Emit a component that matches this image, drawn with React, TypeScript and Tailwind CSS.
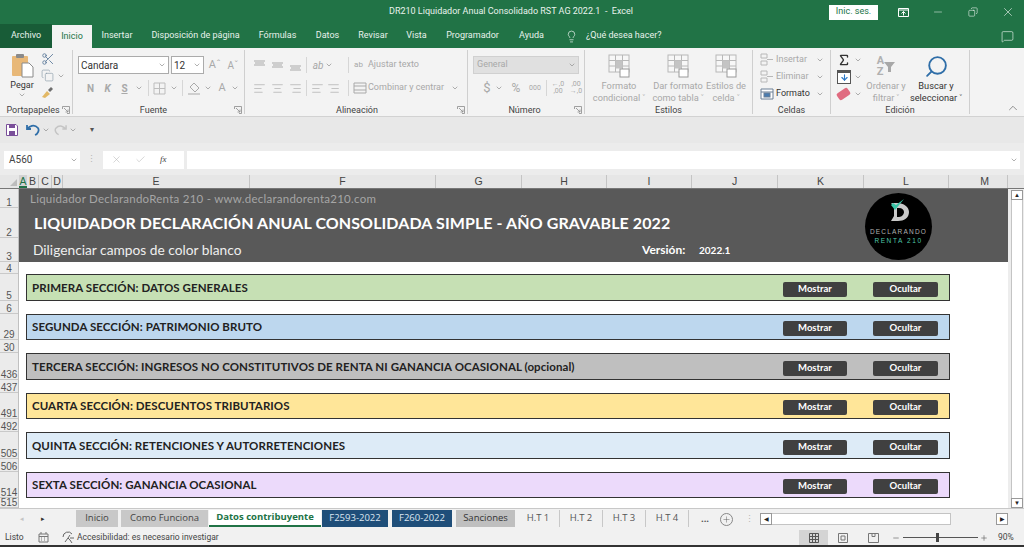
import {
  AlignCenter,
  AlignLeft,
  AlignRight,
  ArrowDown,
  ChevronDown,
  ChevronUp,
  Copy,
  Lightbulb,
  MessageSquare,
  Minus,
  Plus,
  Scissors,
  Search,
  Sigma,
  X,
  Check,
} from "lucide-react";

const ui = "font-['Roboto','Noto_Sans',sans-serif]";
const openSans = "font-['Open_Sans','Noto_Sans',sans-serif]";

const tabs: [string, string][] = [
  ["Insertar", "w-[50px]"],
  ["Disposición de página", "w-[107px]"],
  ["Fórmulas", "w-[57px]"],
  ["Datos", "w-[43px]"],
  ["Revisar", "w-[48px]"],
  ["Vista", "w-[39px]"],
  ["Programador", "w-[73px]"],
  ["Ayuda", "w-[45px]"],
];

const rows: [string, string][] = [
  ["1", "h-[19px]"],
  ["2", "h-[30px]"],
  ["3", "h-[24px]"],
  ["4", "h-[12px]"],
  ["5", "h-[27px]"],
  ["6", "h-[13px]"],
  ["29", "h-[26px]"],
  ["30", "h-[13px]"],
  ["436", "h-[27px]"],
  ["437", "h-[13px]"],
  ["491", "h-[26px]"],
  ["492", "h-[13px]"],
  ["505", "h-[27px]"],
  ["506", "h-[13px]"],
  ["514", "h-[26px]"],
  ["515", "h-[10px]"],
];

const columns: [string, string][] = [
  ["B", "w-[12px]"],
  ["C", "w-[13px]"],
  ["D", "w-[11px]"],
  ["E", "w-[187px]"],
  ["F", "w-[186px]"],
  ["G", "w-[86px]"],
  ["H", "w-[85px]"],
  ["I", "w-[85px]"],
  ["J", "w-[86px]"],
  ["K", "w-[86px]"],
  ["L", "w-[85px]"],
  ["M", "w-[59px] pl-[13px]"],
];

const sections = [
  { title: "PRIMERA SECCIÓN: DATOS GENERALES", cls: "h-[27px] bg-[#c6e0b4]" },
  { title: "SEGUNDA SECCIÓN: PATRIMONIO BRUTO", cls: "h-[26px] bg-[#bdd7ee]" },
  { title: "TERCERA SECCIÓN: INGRESOS NO CONSTITUTIVOS DE RENTA NI GANANCIA OCASIONAL (opcional)", cls: "h-[27px] bg-[#bfbfbf]" },
  { title: "CUARTA SECCIÓN: DESCUENTOS TRIBUTARIOS", cls: "h-[26px] bg-[#ffe699]" },
  { title: "QUINTA SECCIÓN: RETENCIONES Y AUTORRETENCIONES", cls: "h-[27px] bg-[#ddebf7]" },
  { title: "SEXTA SECCIÓN: GANANCIA OCASIONAL", cls: "h-[26px] bg-[#ecdafb]" },
];

const sheetTabs = [
  { name: "Inicio", cls: "w-[42px] bg-[#c8c8c8] text-[#444] mr-[3px]" },
  { name: "Como Funciona", cls: "w-[87px] bg-[#c8c8c8] text-[#444] mr-[1px]" },
  { name: "Datos contribuyente", cls: "w-[112px] bg-white text-[#217346] font-bold border-b-2 border-[#217346] mr-[1px]" },
  { name: "F2593-2022", cls: "w-[66px] bg-[#1f4e79] text-[#dce6f1] mr-[4px]" },
  { name: "F260-2022", cls: "w-[60px] bg-[#1f4e79] text-[#dce6f1] mr-[4px]" },
  { name: "Sanciones", cls: "w-[59px] bg-[#bfbfbf] text-[#333] mr-[2px]" },
  { name: "H.T 1", cls: "w-[43px] text-[#555] border-r border-[#c8c8c8]" },
  { name: "H.T 2", cls: "w-[43px] text-[#555] border-r border-[#c8c8c8]" },
  { name: "H.T 3", cls: "w-[43px] text-[#555] border-r border-[#c8c8c8]" },
  { name: "H.T 4", cls: "w-[43px] text-[#555] border-r border-[#c8c8c8]" },
];

function Caret({ className = "" }: { className?: string }) {
  return <ChevronDown size={8} strokeWidth={2} className={`text-[#8a8a8a] shrink-0 ${className}`} />;
}

function Sep() {
  return <div className="w-px h-[64px] mt-[2px] bg-[#cfcfcf] shrink-0" />;
}

function Launcher() {
  return (
    <svg width="8" height="8" viewBox="0 0 8 8" className="shrink-0 text-[#8a8a8a]" fill="none" stroke="currentColor">
      <path d="M0.5 3V0.5H7.5V7.5H5M2 2l4 4M6 3.5V6H3.5" strokeWidth="0.8" />
    </svg>
  );
}

function GroupLabel({ text, launcher, cls = "" }: { text: string; launcher?: boolean; cls?: string }) {
  return (
    <div className={`h-[12px] flex items-center text-[9px] leading-none text-[#444] ${cls}`}>
      <span className="flex-1 text-center">{text}</span>
      {launcher && <Launcher />}
    </div>
  );
}

function VAlign({ y }: { y: number }) {
  return (
    <svg width="13" height="13" viewBox="0 0 13 13" stroke="#a9a9a9" className="shrink-0">
      <path d={`M1 ${y}h11M2 ${y + 2}h9M1 ${y + 4}h11`} />
    </svg>
  );
}

function GridIcon({ color = "#b8b8b8" }: { color?: string }) {
  return (
    <svg width="22" height="24" viewBox="0 0 22 24" fill="none">
      <rect x="1" y="1" width="20" height="17" fill="#f7f7f7" stroke={color} />
      <path d="M1 6.5H21M1 12H21M7.5 1V18M14.5 1V18" stroke={color} />
      <rect x="7.5" y="6.5" width="7" height="8" fill="#c4c4c4" />
      <rect x="12" y="15" width="9" height="8" fill="#fff" stroke="#9a9a9a" />
    </svg>
  );
}

function BigButton({ lines, cls, icon, dark }: { lines: string[]; cls: string; icon: React.ReactNode; dark?: boolean }) {
  return (
    <div className={`flex flex-col items-center shrink-0 ${cls}`}>
      <div className="h-[26px] flex items-center justify-center mt-[5px]">{icon}</div>
      <div className={`mt-[1px] text-center text-[9.25px] leading-[12px] whitespace-nowrap ${dark ? "text-[#333]" : "text-[#a8a8a8]"}`}>
        {lines.map((l) => (
          <div key={l}>{l}</div>
        ))}
      </div>
    </div>
  );
}

function Ribbon() {
  const ic = "text-[#a9a9a9] shrink-0";
  return (
    <div className={`h-[69px] flex bg-[#f3f3f3] border-b border-[#d2d2d2] ${ui}`}>
      {/* Portapapeles */}
      <div className="w-[72px] flex flex-col shrink-0">
        <div className="h-[57px] flex">
          <div className="w-[40px] flex flex-col items-center pt-[5px] pl-[4px] text-[#333]">
            <svg width="23" height="25" viewBox="0 0 23 25">
              <rect x="1" y="3" width="16" height="20" rx="1" fill="#e8b878" />
              <rect x="5" y="1" width="8" height="4" rx="1" fill="#8a8a8a" />
              <path d="M11 10h7l4 4v10H11z" fill="#fff" stroke="#8a8a8a" />
            </svg>
            <span className="text-[9px] leading-[12px] mt-[1px]">Pegar</span>
            <Caret />
          </div>
          <div className="flex-1 flex flex-col pt-[4px] gap-[2px] pl-[1px]">
            <Scissors size={14} strokeWidth={1.5} className="text-[#5d7a9a]" />
            <div className="flex items-center gap-[3px] mt-[1px]">
              <Copy size={13} strokeWidth={1.2} className="text-[#8a9aa8]" />
              <Caret />
            </div>
            <svg width="14" height="14" viewBox="0 0 14 14" className="mt-[1px]">
              <path d="M1 12l5-6 3 3-5 4z" fill="#e2b865" />
              <path d="M7 5l3-3 2 2-3 3z" fill="#6d6d6d" />
            </svg>
          </div>
        </div>
        <GroupLabel text="Portapapeles" launcher cls="pl-[4px] pr-[2px] justify-between" />
      </div>
      <Sep />

      {/* Fuente */}
      <div className="w-[171px] flex flex-col shrink-0">
        <div className="h-[57px] pt-[8px] pl-[5px] flex flex-col gap-[5px]">
          <div className="h-[18px] flex items-center">
            <div className="w-[91px] h-[18px] bg-white border border-[#ababab] flex items-center pl-[2px] pr-[2px] text-[10px] text-[#333]">
              <span className="flex-1">Candara</span>
              <Caret />
            </div>
            <div className="w-[33px] h-[18px] ml-[2px] bg-white border border-[#ababab] flex items-center pl-[2px] pr-[2px] text-[10px] text-[#333]">
              <span className="flex-1">12</span>
              <Caret />
            </div>
            <span className="ml-[2px] text-[11px] text-[#a9a9a9] w-[18px] text-center">Aˆ</span>
            <span className="text-[10px] text-[#a9a9a9] w-[18px] text-center">Aˇ</span>
          </div>
          <div className="h-[18px] flex items-center pl-[4px] text-[10px] font-bold text-[#a9a9a9]">
            <span className="w-[17px] text-center">N</span>
            <span className="w-[17px] text-center italic">K</span>
            <span className="w-[17px] text-center underline">S</span>
            <Caret className="ml-[2px]" />
            <div className="w-px h-[16px] bg-[#d6d6d6] ml-[5px]" />
            <svg width="13" height="13" viewBox="0 0 13 13" className="ml-[4px]" fill="none" stroke="#bdbdbd">
              <path d="M1 1h11v11H1zM6.5 1v11M1 6.5h11" />
            </svg>
            <Caret className="ml-[4px]" />
            <div className="w-px h-[16px] bg-[#d6d6d6] ml-[4px]" />
            <svg width="14" height="14" viewBox="0 0 14 14" className="ml-[4px]" fill="none" stroke="#a9a9a9">
              <path d="M7 2l5 5-4 4-5-5zM1 13h12" />
            </svg>
            <Caret className="ml-[3px]" />
            <span className="ml-[5px] text-[11px] w-[10px] text-center font-normal">A</span>
            <Caret className="ml-[4px]" />
          </div>
        </div>
        <GroupLabel text="Fuente" launcher cls="pr-[2px]" />
      </div>
      <Sep />

      {/* Alineación */}
      <div className="w-[222px] flex flex-col shrink-0">
        <div className="h-[57px] pt-[8px] pl-[8px] flex flex-col gap-[5px] text-[9px] text-[#a8a8a8] whitespace-nowrap">
          <div className="h-[18px] flex items-center">
            <VAlign y={2} />
            <span className="w-[5px]" />
            <VAlign y={4} />
            <span className="w-[5px]" />
            <VAlign y={7} />
            <div className="w-px h-[16px] bg-[#d6d6d6] ml-[4px] mr-[4px]" />
            <span className="w-[14px] text-center text-[10px] italic">ab</span>
            <Caret />
            <div className="w-px h-[16px] bg-[#d6d6d6] ml-[15px]" />
            <span className="w-[19px] text-[8px] leading-[8px] text-center">ab</span>
            <span>Ajustar texto</span>
          </div>
          <div className="h-[18px] flex items-center">
            <AlignLeft size={13} strokeWidth={1.2} className={`${ic} mr-[5px]`} />
            <AlignCenter size={13} strokeWidth={1.2} className={`${ic} mr-[5px]`} />
            <AlignRight size={13} strokeWidth={1.2} className={`${ic}`} />
            <div className="w-px h-[16px] bg-[#d6d6d6] ml-[4px] mr-[4px]" />
            <AlignLeft size={13} strokeWidth={1.2} className={`${ic} mr-[3px]`} />
            <AlignRight size={13} strokeWidth={1.2} className={`${ic}`} />
            <div className="w-px h-[16px] bg-[#d6d6d6] ml-[8px] mr-[4px]" />
            <svg width="14" height="12" viewBox="0 0 14 12" fill="none" stroke="#a9a9a9" className="mr-[1px] shrink-0">
              <path d="M1 1h12v10H1zM1 4h12M1 8h12" />
            </svg>
            <span>Combinar y centrar</span>
            <Caret className="ml-[7px]" />
          </div>
        </div>
        <GroupLabel text="Alineación" launcher cls="pl-[12px] pr-[2px]" />
      </div>
      <Sep />

      {/* Número */}
      <div className="w-[116px] flex flex-col shrink-0">
        <div className="h-[57px] pt-[8px] pl-[5px] flex flex-col gap-[5px] text-[#a8a8a8]">
          <div className="w-[106px] h-[18px] bg-[#e0e0e0] border border-[#d0d0d0] flex items-center pl-[3px] pr-[2px] text-[9px]">
            <span className="flex-1">General</span>
            <Caret />
          </div>
          <div className="h-[18px] flex items-center pl-[9px] text-[13px]">
            <span className="w-[10px] text-center">$</span>
            <Caret className="ml-[3px]" />
            <span className="ml-[6px] w-[14px] text-center text-[12px]">%</span>
            <span className="ml-[4px] w-[16px] text-center text-[7px]">000</span>
            <div className="w-px h-[16px] bg-[#d6d6d6] ml-[3px]" />
            <span className="ml-[3px] w-[16px] text-center text-[7px] leading-[7px]">←,0 ,00</span>
            <span className="ml-[2px] w-[16px] text-center text-[7px] leading-[7px]">,00 →,0</span>
          </div>
        </div>
        <GroupLabel text="Número" launcher cls="pl-[7px] pr-[2px]" />
      </div>
      <Sep />

      {/* Estilos */}
      <div className="w-[167px] flex flex-col shrink-0">
        <div className="h-[57px] flex">
          <BigButton cls="w-[68px]" lines={["Formato", "condicional ˅"]} icon={<GridIcon />} />
          <BigButton cls="w-[50px]" lines={["Dar formato", "como tabla ˅"]} icon={<GridIcon />} />
          <BigButton cls="w-[46px]" lines={["Estilos de", "celda ˅"]} icon={<GridIcon />} />
        </div>
        <GroupLabel text="Estilos" />
      </div>
      <Sep />

      {/* Celdas */}
      <div className="w-[77px] flex flex-col shrink-0">
        <div className="h-[57px] pt-[3px] pl-[7px] flex flex-col text-[9px] text-[#a8a8a8]">
          {["Insertar", "Eliminar"].map((t) => (
            <div key={t} className="h-[17px] flex items-center">
              <svg width="14" height="13" viewBox="0 0 14 13" fill="none" stroke="#b8b8b8" className="mr-[2px]">
                <path d="M1 1h6v4H1zM1 8h6v4H1zM7 6.5h6" />
              </svg>
              <span className="w-[40px]">{t}</span>
              <Caret />
            </div>
          ))}
          <div className="h-[17px] flex items-center text-[#333]">
            <svg width="14" height="13" viewBox="0 0 14 13" fill="#fff" stroke="#6b7f95" className="mr-[2px]">
              <path d="M1 2h12v10H1zM1 5h12" />
              <rect x="4" y="6" width="6" height="4" fill="#4a7cb0" />
            </svg>
            <span className="w-[40px]">Formato</span>
            <Caret />
          </div>
        </div>
        <GroupLabel text="Celdas" />
      </div>
      <Sep />

      {/* Edición */}
      <div className="w-[138px] flex flex-col shrink-0">
        <div className="h-[57px] flex">
          <div className="w-[36px] pt-[3px] pl-[6px] flex flex-col">
            <div className="h-[17px] flex items-center gap-[3px]">
              <Sigma size={14} strokeWidth={2.4} className="text-[#333]" />
              <Caret />
            </div>
            <div className="h-[17px] flex items-center gap-[3px]">
              <div className="w-[14px] h-[14px] bg-white border border-[#555] border-t-[3px] flex items-center justify-center">
                <ArrowDown size={9} strokeWidth={3} className="text-[#2b78c5]" />
              </div>
              <Caret />
            </div>
            <div className="h-[17px] flex items-center gap-[3px]">
              <div className="w-[13px] h-[8px] bg-[#e06b80] rounded-[2px] rotate-[-35deg]" />
              <Caret className="ml-[1px]" />
            </div>
          </div>
          <BigButton
            cls="w-[38px]"
            lines={["Ordenar y", "filtrar ˅"]}
            icon={
              <div className="flex items-center">
                <div className="flex flex-col text-[11px] leading-[11px] font-bold text-[#b0b0b0]">
                  <span>A</span>
                  <span>Z</span>
                </div>
                <svg width="11" height="11" viewBox="0 0 11 11" fill="#a8a8a8">
                  <path d="M0 1h11L7 6v5H4V6z" />
                </svg>
              </div>
            }
          />
          <BigButton
            cls="w-[58px] ml-[2px]"
            dark
            lines={["Buscar y", "seleccionar ˅"]}
            icon={<Search size={25} strokeWidth={1.8} className="text-[#2f6ea8] -scale-x-100" />}
          />
        </div>
        <GroupLabel text="Edición" />
      </div>
      <Sep />
      <div className="flex-1 flex items-end justify-end pr-[4px] pb-[1px]">
        <ChevronUp size={14} strokeWidth={1.2} className="text-[#666]" />
      </div>
    </div>
  );
}

function Sheet() {
  return (
    <div className="flex h-[319px]">
      <div className="w-[19px] shrink-0 bg-[#ebebeb] flex flex-col border-r border-[#c0c0c0] font-['Liberation_Sans',sans-serif]">
        {rows.map(([label, h]) => (
          <div key={label} className={`${h} flex items-end justify-center border-b border-[#c9c9c9] text-[10px] leading-[9px] text-[#555]`}>
            {label}
          </div>
        ))}
      </div>
      <div className="relative w-[989px] shrink-0 bg-white flex flex-col">
        <div className="h-[73px] bg-[#595959] flex flex-col font-['Lato',sans-serif]">
          <div className="h-[19px] pl-[11px] flex items-center text-[11.5px] text-[#a6a6a6] tracking-[0.25px]">
            Liquidador DeclarandoRenta 210 - www.declarandorenta210.com
          </div>
          <div className="h-[30px] pl-[15px] flex items-center text-[16px] font-bold text-white tracking-[0.09px]">
            LIQUIDADOR DECLARACIÓN ANUAL CONSOLIDADA SIMPLE - AÑO GRAVABLE 2022
          </div>
          <div className="h-[24px] pl-[14px] flex items-center text-white">
            <span className="w-[609px] text-[13.75px] text-[#eeeeee]">Diligenciar campos de color blanco</span>
            <span className="w-[57px] text-[12px] font-bold">Versión:</span>
            <span className="text-[10px] font-bold">2022.1</span>
          </div>
        </div>
        {/* logo floats over the cells */}
        <div className="absolute left-[846px] top-[4px] w-[67px] h-[67px] rounded-full bg-black flex flex-col items-center font-['Liberation_Sans',sans-serif]">
          <svg width="24" height="26" viewBox="0 0 24 26" className="mt-[4px]">
            <path d="M4 6h6c7 0 12 4 12 9 0 6-5 9-11 9H4l3-5V9z" fill="#c9c9c9" />
            <path d="M10 11h2c3 0 5 2 5 4s-2 5-5 5h-2z" fill="#000" />
            <path d="M4 8l4 5 9-11-8 6-3-2z" fill="#39c4a6" />
          </svg>
          <span className="text-[6.5px] leading-[9px] tracking-[1.2px] text-[#b0b0b0] mt-[4px]">DECLARANDO</span>
          <span className="text-[6.5px] leading-[9px] tracking-[1.6px] text-[#4fc7aa]">RENTA 210</span>
        </div>
        <div className="flex flex-col gap-[13px] pl-[7px] pt-[12px] font-['Lato',sans-serif]">
          {sections.map((s) => (
            <div key={s.title} className={`${s.cls} w-[924px] border border-[#333] flex items-center pl-[5px] pr-[11px]`}>
              <span className="flex-1 text-[11.5px] font-bold text-[#222] tracking-[0.07px] whitespace-nowrap">{s.title}</span>
              <div className="flex gap-[26px] pt-[3px] text-[9.5px] font-bold text-white">
                <div className="w-[64px] h-[15px] rounded-[2px] bg-[#404040] flex items-center justify-center">Mostrar</div>
                <div className="w-[65px] h-[15px] rounded-[2px] bg-[#404040] flex items-center justify-center">Ocultar</div>
              </div>
            </div>
          ))}
        </div>
      </div>
      <div className="flex-1 bg-[#ededed] flex flex-col items-center pt-[1px] pl-[2px]">
        <div className="w-[12px] h-[10px] bg-white border border-[#999] text-[#222] flex items-center justify-center text-[6px] leading-none">▲</div>
        <div className="w-[12px] flex-1 bg-white border-x border-[#c4c4c4]" />
        <div className="w-[12px] h-[10px] bg-white border border-[#999] text-[#222] flex items-center justify-center text-[6px] leading-none">▼</div>
      </div>
    </div>
  );
}

export default function App() {
  return (
    <div className={`w-[1024px] h-[547px] overflow-hidden bg-[#f1f1f1] ${ui}`}>
      {/* title bar */}
      <div className="h-[24px] bg-[#217346] flex items-center text-white">
        <div className="w-[784px] text-center text-[9px] text-[#e8f2ec] pl-[238px]">
          DR210 Liquidador Anual Consolidado RST AG 2022.1&nbsp; -&nbsp; Excel
        </div>
        <div className="ml-[45px] w-[49px] h-[15px] bg-white text-[#217346] text-[9px] flex items-center justify-center">Inic. ses.</div>
        <svg width="11" height="9" viewBox="0 0 11 9" fill="none" stroke="#fff" className="ml-[20px]">
          <path d="M0.5 0.500h10v8h-10zM0.500 2h10M5.500 7.500V3.500M3.500 5.500l2-2 2 2" />
        </svg>
        <Minus size={12} strokeWidth={1} className="ml-[23px] text-white" />
        <Copy size={10} strokeWidth={1.3} className="ml-[24px] text-white -scale-x-100" />
        <X size={14} strokeWidth={1} className="ml-[23px] text-white" />
      </div>

      {/* tabs */}
      <div className="h-[24px] bg-[#217346] flex items-end text-[9px] text-[#e8f2ec]">
        <div className="w-[52px] h-[24px] bg-[#185c37] flex items-center justify-center">Archivo</div>
        <div className="w-[40px] h-[23px] bg-[#f3f3f3] text-[#217346] flex items-center justify-center">Inicio</div>
        <div className="h-[24px] flex items-center">
          {tabs.map(([t, w]) => (
            <span key={t} className={`${w} text-center whitespace-nowrap`}>
              {t}
            </span>
          ))}
          <span className="flex items-center gap-[8px] ml-[11px]">
            <Lightbulb size={13} strokeWidth={1.3} />
            ¿Qué desea hacer?
          </span>
        </div>
        <div className="flex-1 h-[24px] flex items-center justify-end pr-[10px]">
          <MessageSquare size={13} strokeWidth={1.2} />
        </div>
      </div>

      <Ribbon />

      {/* quick access */}
      <div className="h-[26px] bg-[#e8e8e8] flex items-center pl-[6px]">
        <svg width="12" height="12" viewBox="0 0 12 12" className="shrink-0">
          <path d="M0.5 0.5h9.5l1.5 1.5v9.5H0.5z" fill="#fff" stroke="#7a4f9a" />
          <rect x="3" y="1" width="6" height="3" fill="#7a4f9a" />
          <rect x="3" y="7" width="6" height="4" fill="#7a4f9a" />
        </svg>
        <svg width="14" height="12" viewBox="0 0 14 12" fill="none" stroke="#2f6ea8" strokeWidth="1.8" className="ml-[8px]">
          <path d="M1 1v4h4M1.5 5C3 2.5 8-.5 12 4c1.5 2 0 6-3 7" />
        </svg>
        <Caret className="ml-[2px]" />
        <svg width="13" height="12" viewBox="0 0 14 12" fill="none" stroke="#c4c4c4" strokeWidth="1.6" className="ml-[4px]">
          <path d="M13 1v4H9M12.5 5C11 2.500 6-.5 2 4c-1.500 2 0 6 3 7" />
        </svg>
        <Caret className="ml-[2px]" />
        <span className="ml-[13px] text-[8px] text-[#555] leading-none">▾</span>
      </div>

      {/* formula bar */}
      <div className="h-[32px] bg-[#ececec] flex items-center pl-[4px] pt-[1px]">
        <div className="w-[76px] h-[18px] bg-white flex items-center pl-[5px] pr-[2px] text-[10px] text-[#444]">
          <span className="flex-1">A560</span>
          <Caret />
        </div>
        <span className="w-[23px] text-center text-[9px] text-[#b5b5b5]">⋮</span>
        <div className="w-[81px] h-[18px] bg-white flex items-center pl-[8px] gap-[13px]">
          <X size={11} strokeWidth={1.2} className="text-[#b5b5b5]" />
          <Check size={11} strokeWidth={1.2} className="text-[#b5b5b5]" />
          <span className="text-[9px] italic font-['Liberation_Serif',serif] text-[#444] ml-[1px]">fx</span>
        </div>
        <div className="ml-[3px] w-[833px] h-[18px] bg-white flex items-center justify-end pr-[2px]">
          <Caret />
        </div>
      </div>

      {/* column header */}
      <div className="h-[14px] bg-[#e6e6e6] flex border-b border-[#777] font-['Liberation_Sans',sans-serif] text-[10.5px] leading-[13px] text-[#444]">
        <div className="w-[19px] flex items-end justify-end pr-[2px] pb-[2px]">
          <div className="w-0 h-0 border-l-[7px] border-l-transparent border-b-[7px] border-b-[#bdbdbd]" />
        </div>
        <div className="w-[8px] bg-[#d2d2d2] border-b-2 border-[#217346] text-[#217346] flex justify-center">A</div>
        {columns.map(([c, w]) => (
          <div key={c} className={`${w} flex justify-center border-r border-[#c4c4c4]`}>
            {c}
          </div>
        ))}
      </div>

      <Sheet />

      {/* sheet tabs */}
      <div className={`h-[22px] bg-[#f1f1f1] border-t border-[#c8c8c8] flex items-start text-[9.5px] ${openSans}`}>
        <div className="w-[76px] h-[17px] mt-[1px] flex items-center pl-[20px] gap-[17px] text-[7px] text-[#333] leading-none">
          <span className="text-[#c4c4c4]">◂</span>
          <span>▸</span>
        </div>
        {sheetTabs.map((t) => (
          <div key={t.name} className={`h-[17px] mt-[1px] shrink-0 flex items-center justify-center ${t.cls}`}>
            {t.name}
          </div>
        ))}
        <div className="h-[18px] mt-[1px] flex items-center text-[#555]">
          <span className="w-[16px] ml-[8px] text-center font-bold">...</span>
          <div className="ml-[7px] w-[13px] h-[13px] rounded-full border border-[#888] flex items-center justify-center">
            <Plus size={9} strokeWidth={1.2} />
          </div>
          <span className="ml-[12px] w-[6px] text-[#b5b5b5] text-[9px]">⋮</span>
          <div className="ml-[9px] w-[248px] h-[13px] flex items-center">
            <div className="w-[12px] h-[12px] bg-white border border-[#999] flex items-center justify-center text-[6px] text-[#222]">◀</div>
            <div className="w-[179px] h-[12px] bg-white border-y border-r border-[#c4c4c4]" />
            <div className="flex-1" />
            <div className="w-[12px] h-[12px] bg-white border border-[#999] flex items-center justify-center text-[6px] text-[#222]">▶</div>
          </div>
        </div>
      </div>

      {/* status bar */}
      <div className="h-[15px] bg-[#f1f1f1] flex items-center text-[8.5px] text-[#444]">
        <span className="w-[38px] pl-[5px]">Listo</span>
        <svg width="11" height="11" viewBox="0 0 11 11" fill="none" stroke="#777">
          <path d="M1 2h9v8H1zM1 4.500h9M3 0v2M8 0v2M3 6h1M6 6h1M3 8h1M6 8h1" />
        </svg>
        <svg width="13" height="13" viewBox="0 0 13 13" fill="none" stroke="#666" className="ml-[13px]">
          <path d="M1 6a5 5 0 0 1 9-3M8 4l-2 3 2 2 2 3M6 7l-3 4M8 7h4" />
        </svg>
        <span className="ml-[2px] w-[722px]">Accesibilidad: es necesario investigar</span>
        <div className="w-[29px] h-[15px] bg-[#d4d4d4] flex items-center justify-center">
          <svg width="10" height="10" viewBox="0 0 10 10" fill="none" stroke="#555">
            <path d="M0.500 0.500h9v9h-9zM3.500 0.500v9M6.500 0.500v9M0.500 3.500h9M0.500 6.500h9" />
          </svg>
        </div>
        <svg width="10" height="10" viewBox="0 0 10 10" fill="none" stroke="#777" className="ml-[10px]">
          <path d="M0.500 0.500h9v9h-9zM3 3h4v4H3z" />
        </svg>
        <svg width="11" height="10" viewBox="0 0 11 10" fill="none" stroke="#777" className="ml-[20px]">
          <path d="M0.500 0.500h10v9h-10zM4 0.500v3h3v-3" />
        </svg>
        <Minus size={8} className="ml-[13px] text-[#666]" />
        <div className="relative w-[75px] h-px bg-[#555] ml-[3px]">
          <div className="absolute left-[33px] -top-[4px] w-[3px] h-[9px] bg-[#444]" />
        </div>
        <Plus size={8} className="ml-[2px] text-[#666]" />
        <span className="ml-[10px]">90%</span>
      </div>
      <div className="h-[2px] bg-[#333]" />
    </div>
  );
}
